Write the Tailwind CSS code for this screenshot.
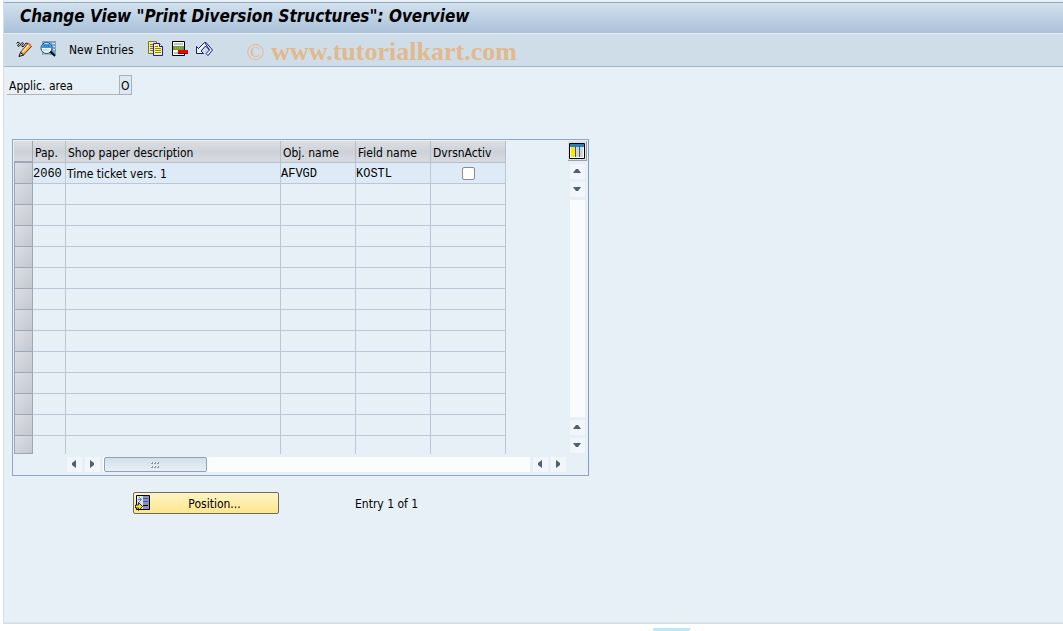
<!DOCTYPE html>
<html lang="en">
  <head>
    <meta charset="UTF-8" />
    <meta name="viewport" content="width=device-width, initial-scale=1.0" />
    <title>Change View "Print Diversion Structures": Overview</title>
    <script src="https://cdn.jsdelivr.net/npm/@tailwindcss/browser@4"></script>
  </head>
  <body class="min-h-screen flex flex-col bg-white pl-1 text-[12px] leading-4 text-black font-['Tahoma','DejaVu_Sans_Condensed',sans-serif]">
    <div class="flex-1 flex flex-col bg-[#e7eff7] border-b border-[#dde5ea] outline outline-[#d3dfe8]">
      <!-- Title bar -->
      <header class="mt-0.5 h-8 flex items-center pl-4 pb-1 border-t border-b border-t-[#93a9bd] border-b-[#e3edf5] bg-linear-to-b from-[#d2e1ed] to-[#a9c1d9]">
        <h1 class="text-[17px] leading-5 font-bold italic whitespace-nowrap">Change View "Print Diversion Structures": Overview</h1>
      </header>

      <!-- Toolbar -->
      <div class="h-[33px] flex items-center pl-3 bg-[#cfdde8] border-b border-[#a3b6c8]">
        <button type="button" aria-label="Display/Change" class="mr-2 pb-0.5">
          <svg class="block" width="16" height="16" viewBox="0 0 16 16">
            <path d="M.5 2.500L2 1l1.500 1L1.500 4.500 3 5.500 6 1.500l1.500 1L5.500 5 7 6l3-4 2 .5" fill="none" stroke="#111" />
            <path d="M4.500 11.500l7.500-9 3.500 3-8 8.500z" fill="#f8a848" stroke="#6b3000" />
            <path d="M6.500 11l6.500-7.500" stroke="#fff0b0" stroke-width="1.500" />
            <path d="M11.500 3l1.500-1.500 2.500 2.500-1 1.500z" fill="#f07040" />
            <path d="M3 15.500l1.500-4 3 2.500z" fill="#fff" stroke="#000" />
          </svg>
        </button>
        <button type="button" aria-label="Details" class="mr-[13px] pb-0.5">
          <svg class="block" width="16" height="16" viewBox="0 0 16 16">
            <path d="M2 0h14v14H2z" fill="#7ba3cf" />
            <path d="M12 2.500h3M13 5.500h2M13 8.500h2M3 13h6" stroke="#c6dcf0" />
            <circle cx="6.500" cy="7" r="5.500" fill="#eef9ff" stroke="#29465f" />
            <path d="M3 3h7l1 2v2H2V5z" fill="#3d98e4" />
            <path d="M4 5h6" stroke="#1556b0" stroke-dasharray="1 1" />
            <path d="M3 9h6" stroke="#9cc4e4" />
            <path d="M10.500 10.500l4.500 4.500" stroke="#000" stroke-width="2" />
          </svg>
        </button>
        <button type="button" class="mr-3.5 whitespace-nowrap">New Entries</button>
        <button type="button" aria-label="Copy As" class="mr-2 pb-0.5">
          <svg class="block" width="16" height="16" viewBox="0 0 16 16">
            <path d="M.5 .5h8v12h-8z" fill="#f7ee84" stroke="#77733a" />
            <path d="M2 3.500h3M2 5.500h3M2 7.500h3M2 9.500h3" stroke="#77733a" />
            <path d="M5.500 2.500h6l3 3v9h-9z" fill="#fff46a" stroke="#1515d8" />
            <path d="M11.500 2.500v3h3" fill="#fff" stroke="#1515d8" />
            <path d="M7 5.500h3M7 7.500h6M7 9.500h6M7 11.500h6" stroke="#85813a" />
          </svg>
        </button>
        <button type="button" aria-label="Delete" class="mr-2 pb-0.5">
          <svg class="block" width="16" height="16" viewBox="0 0 16 16">
            <path d="M.5 .5h12v14H.5z" fill="#fff" stroke="#000" />
            <path d="M2 2h9v2H2zM2 11h5v2H2z" fill="#b9c2cc" />
            <path d="M1 5h11v4H1z" fill="#6f9f28" />
            <path d="M3 7h7" stroke="#b5d060" stroke-dasharray="1 1" />
            <path d="M6 9h10v4H6z" fill="#f00000" />
            <path d="M6 12.500h10" stroke="#6b0000" />
          </svg>
        </button>
        <button type="button" aria-label="Undo Change" class="mr-[34px] pb-0.5">
          <svg class="block" width="17" height="16" viewBox="0 0 17 16">
            <path d="M.5 5.500v7h7L5 10l4.500-5 4 4-3.500 3.500 2 2L16.500 9 10 1.500H8.500L2.500 7.500z" fill="#eef5fb" stroke="#15158c" />
            <path d="M9 2l4.500 7" fill="none" stroke="#15158c" />
          </svg>
        </button>
        <span class="pt-1 text-[26px] leading-7 text-[#e2b98d] whitespace-nowrap font-['Liberation_Serif',serif]"><span class="text-[24px]">©</span> <b>www.tutorialkart.com</b></span>
      </div>

      <main class="pt-2 pl-[3px]">
        <!-- Work area key -->
        <div class="flex items-end">
          <label for="area" class="w-28 pl-0.5 border-b border-[#b3b3b3]">Applic. area</label>
          <input id="area" type="text" value="O" class="w-[13px] h-5 pl-px pt-px bg-[#dce9f4] border border-[#a9b1b9]" />
        </div>

        <!-- Table control -->
        <section class="mt-11 ml-[5px] w-[577px] border border-[#8fa9c4] border-r-[#7f9fc0] p-px flex justify-between">
          <div>
            <table class="table-fixed w-[492px] border-separate border-spacing-0">
              <colgroup>
                <col class="w-[19px]" />
                <col class="w-[33px]" />
                <col class="w-[215px]" />
                <col class="w-[75px]" />
                <col class="w-[75px]" />
                <col class="w-[75px]" />
              </colgroup>
              <thead>
                <tr class="h-[22px] text-left whitespace-nowrap bg-linear-to-b from-[#dcdfe3] via-[#cdd2d8] to-[#d9dde2]">
                  <td class="p-0 border-r border-b-2 border-[#9fa7b4]"></td>
                  <th class="p-0 pt-0.5 pl-0.5 font-normal border-r border-b border-[#b5bfcc]">Pap.</th>
                  <th class="p-0 pt-0.5 pl-0.5 font-normal border-r border-b border-[#b5bfcc]">Shop paper description</th>
                  <th class="p-0 pt-0.5 pl-0.5 font-normal border-r border-b border-[#b5bfcc]">Obj. name</th>
                  <th class="p-0 pt-0.5 pl-0.5 font-normal border-r border-b border-[#b5bfcc]">Field name</th>
                  <th class="p-0 pt-0.5 pl-0.5 font-normal border-r border-b border-[#b5bfcc]">DvrsnActiv</th>
                </tr>
              </thead>
              <tbody id="rows">
                <tr class="h-[21px] whitespace-nowrap bg-[#deebf6]">
                  <td class="p-0 border border-t-0 border-[#9fa7b4] bg-linear-to-br from-[#dcdfe4] to-[#c3c8d0]"></td>
                  <td class="p-0 pt-0.5 border-r border-b border-[#bcc6d6] font-['Liberation_Mono',monospace]">2060</td>
                  <td class="p-0 pt-0.5 pl-px border-r border-b border-[#bcc6d6]">Time ticket vers. 1</td>
                  <td class="p-0 pt-0.5 border-r border-b border-[#bcc6d6] font-['Liberation_Mono',monospace]">AFVGD</td>
                  <td class="p-0 pt-0.5 border-r border-b border-[#bcc6d6] font-['Liberation_Mono',monospace]">KOSTL</td>
                  <td class="p-0 border-r border-b border-[#bcc6d6]">
                    <input type="checkbox" aria-label="DvrsnActiv" class="block mx-auto size-[13px] appearance-none bg-white border border-[#8b8b8b] rounded-xs" />
                  </td>
                </tr>
              </tbody>
            </table>

            <!-- Horizontal scroll bar -->
            <div class="mt-[3px] mb-0.5 ml-[53px] w-[499px] h-[15px] flex gap-[3px]">
              <button type="button" aria-label="First column" class="w-[15px] bg-[#f2f6fa]">
                <svg class="block" width="15" height="15" viewBox="0 0 15 15"><path d="M9 3v8L5 8V6z" fill="#4b6172" /></svg>
              </button>
              <button type="button" aria-label="Previous column" class="w-[15px] bg-[#f2f6fa]">
                <svg class="block" width="15" height="15" viewBox="0 0 15 15"><path d="M5 3v8l4-3V6z" fill="#4b6172" /></svg>
              </button>
              <div class="flex-1 pl-px bg-[#fbfcfc]">
                <div class="w-[103px] h-[15px] flex items-center justify-center border border-[#8fa3b5] rounded-xs bg-linear-to-b from-[#d3e0ea] to-[#e6eff5]">
                  <svg width="9" height="6" viewBox="0 0 9 6" fill="#8b9bab"><path d="M0 0h2v2H0zM3 0h2v2H3zM6 0h2v2H6zM0 4h2v2H0zM3 4h2v2H3zM6 4h2v2H6z" /><path d="M0 0h1v1H0zM3 0h1v1H3zM6 0h1v1H6zM0 4h1v1H0zM3 4h1v1H3zM6 4h1v1H6z" fill="#fff" /></svg>
                </div>
              </div>
              <button type="button" aria-label="Next column" class="w-[15px] bg-[#f2f6fa]">
                <svg class="block" width="15" height="15" viewBox="0 0 15 15"><path d="M9 3v8L5 8V6z" fill="#4b6172" /></svg>
              </button>
              <button type="button" aria-label="Last column" class="w-[15px] bg-[#f2f6fa]">
                <svg class="block" width="15" height="15" viewBox="0 0 15 15"><path d="M5 3v8l4-3V6z" fill="#4b6172" /></svg>
              </button>
            </div>
          </div>

          <!-- Configuration button and vertical scroll bar -->
          <div class="w-[19px] mb-[21px] flex flex-col items-center gap-[3px]">
            <button type="button" aria-label="Configuration" class="w-[19px] h-5 pl-px bg-[#dde2e8] border-r border-b border-[#9aa3ad]">
              <svg class="block" width="16" height="16" viewBox="0 0 16 16">
                <path d="M.5 .5h15v15H.5z" fill="#fff" stroke="#000" />
                <path d="M1 1h14v3H1z" fill="#2f7fc0" />
                <path d="M2 4h4v10H2z" fill="#ffe800" />
                <path d="M7 4h3v10H7zM11 4h3v10h-3z" fill="#cfd6de" />
                <path d="M6.500 3v11M10.500 3v11" stroke="#555" />
              </svg>
            </button>
            <button type="button" aria-label="First row" class="size-[15px] bg-[#f2f6fa]">
              <svg class="block" width="15" height="15" viewBox="0 0 15 15"><path d="M3 9h8L8 5H6z" fill="#4b6172" /></svg>
            </button>
            <button type="button" aria-label="Previous row" class="size-[15px] bg-[#f2f6fa]">
              <svg class="block" width="15" height="15" viewBox="0 0 15 15"><path d="M3 5h8L8 9H6z" fill="#4b6172" /></svg>
            </button>
            <div class="w-[15px] flex-1 bg-[#f9fbfc]"></div>
            <button type="button" aria-label="Next row" class="size-[15px] bg-[#f2f6fa]">
              <svg class="block" width="15" height="15" viewBox="0 0 15 15"><path d="M3 9h8L8 5H6z" fill="#4b6172" /></svg>
            </button>
            <button type="button" aria-label="Last row" class="size-[15px] bg-[#f2f6fa]">
              <svg class="block" width="15" height="15" viewBox="0 0 15 15"><path d="M3 5h8L8 9H6z" fill="#4b6172" /></svg>
            </button>
          </div>
        </section>

        <!-- Position button and counter -->
        <div class="mt-4 ml-[126px] flex items-center">
          <button type="button" class="w-[146px] h-[22px] flex items-center pl-px border border-[#6e6a5c] rounded-xs bg-linear-to-b from-[#fff4c4] to-[#fde68c]">
            <svg width="16" height="16" viewBox="0 0 16 16">
              <path d="M1.500 .5h13v14h-13z" fill="#d6e6ee" stroke="#000" />
              <path d="M8 1h6v13H8z" fill="#8d8fc4" />
              <path d="M8 3.500h5M8 6.500h5" stroke="#555a90" />
              <path d="M8 10.500h5" stroke="#000" />
              <path d="M3 4.500h3M4 2l2.500 2.500L4 7" fill="none" stroke="#6d7c88" />
              <path d="M.5 10h3V7.500L7.500 11.500 3.500 15.500V13h-3z" fill="#ffe800" stroke="#000" stroke-width=".8" />
            </svg>
            <span class="flex-1 pt-0.5">Position...</span>
          </button>
          <span class="ml-[76px] pt-0.5">Entry 1 of 1</span>
        </div>
      </main>
    </div>

    <footer class="h-2 pt-[5px] pl-[649px]">
      <svg class="block" width="38" height="3" viewBox="0 0 38 3"><path d="M0 0h38l-2 3H0z" fill="#b9e9fb" /></svg>
    </footer>

    <script>
      // Fill the rest of the table control with empty lines
      const rows = document.getElementById("rows");
      for (let i = 0; i < 12; i++) {
        rows.insertAdjacentHTML(
          "beforeend",
          `<tr class="h-[21px]">
            <td class="p-0 border border-t-0 border-[#9fa7b4] bg-linear-to-br from-[#dcdfe4] to-[#c3c8d0]"></td>
            ${'<td class="p-0 border-r border-b border-[#bcc6d6]"></td>'.repeat(5)}
          </tr>`
        );
      }
      // The last line is cut off by the scroll bar
      rows.insertAdjacentHTML(
        "beforeend",
        `<tr class="h-[18px]">
          <td class="p-0 border border-t-0 border-[#9fa7b4] bg-linear-to-br from-[#dcdfe4] to-[#c3c8d0]"></td>
          ${'<td class="p-0 border-r border-[#bcc6d6]"></td>'.repeat(5)}
        </tr>`
      );
    </script>
  </body>
</html>
